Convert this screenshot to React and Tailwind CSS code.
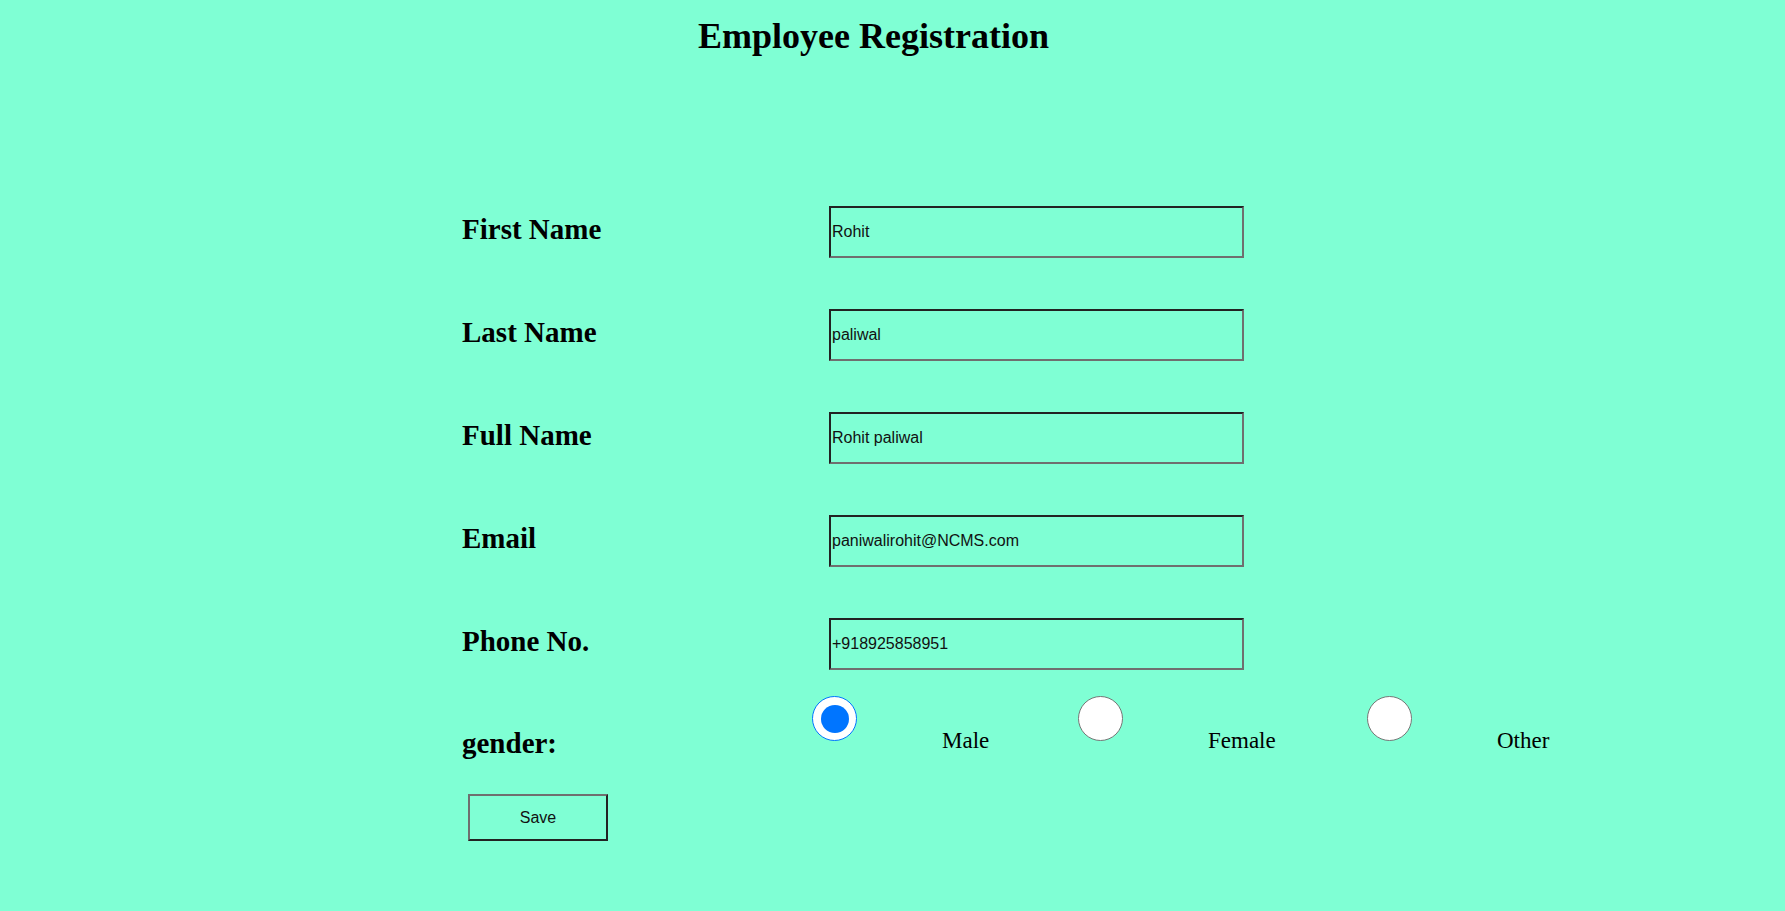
import React, { useState } from "react";

const fields = [
  { label: "First Name", value: "Rohit" },
  { label: "Last Name", value: "paliwal" },
  { label: "Full Name", value: "Rohit paliwal" },
  { label: "Email", value: "paniwalirohit@NCMS.com" },
  { label: "Phone No.", value: "+918925858951" },
];

const genders = [
  { key: "male", label: "Male", width: "w-[136px]" },
  { key: "female", label: "Female", width: "w-[159px]" },
  { key: "other", label: "Other", width: "w-[120px]" },
];

const Radio = ({ checked, onClick }) => (
  <button
    type="button"
    onClick={onClick}
    className={
      checked
        ? "w-[45px] h-[45px] shrink-0 rounded-full bg-white border border-[#0075ff] flex items-center justify-center"
        : "w-[45px] h-[45px] shrink-0 rounded-full bg-white border border-[#767676]"
    }
  >
    {checked && <span className="block w-[28px] h-[28px] rounded-full bg-[#0075ff]" />}
  </button>
);

export default function App() {
  const [values, setValues] = useState(fields.map((f) => f.value));
  const [gender, setGender] = useState("male");

  return (
    <div className="min-h-screen w-full bg-[#7fffd4] text-black font-['Liberation_Serif',serif]">
      <h1 className="pt-[14px] pr-[38px] text-center text-[36px] leading-[44px] font-bold">
        Employee Registration
      </h1>

      <form className="pl-[462px] pt-[148px]" onSubmit={(e) => e.preventDefault()}>
        {fields.map((f, i) => (
          <div key={f.label} className={i < fields.length - 1 ? "flex items-start mb-[51px]" : "flex items-start"}>
            <label className="w-[367px] text-[29px] leading-[46px] font-bold">{f.label}</label>
            <input
              type="text"
              value={values[i]}
              onChange={(e) => {
                const next = [...values];
                next[i] = e.target.value;
                setValues(next);
              }}
              className="w-[415px] h-[52px] border-2 border-t-[#222] border-l-[#222] border-r-[#6f6f6f] border-b-[#6f6f6f] bg-transparent px-[1px] text-[16px] text-[#111] font-['Liberation_Sans',sans-serif] outline-none"
            />
          </div>
        ))}

        {/* gender row */}
        <div className="flex items-start h-[70px] mt-[26px]">
          <label className="w-[350px] mt-[24px] text-[29px] leading-[46px] font-bold">gender:</label>
          {genders.map((g) => (
            <div key={g.key} className="flex items-start">
              <Radio checked={gender === g.key} onClick={() => setGender(g.key)} />
              <span className={`${g.width} ml-[85px] mt-[34px] text-[23px] leading-[22px]`}>{g.label}</span>
            </div>
          ))}
        </div>

        <button
          type="submit"
          className="ml-[6px] mt-[28px] w-[140px] h-[47px] border-2 border-t-[#6f6f6f] border-l-[#6f6f6f] border-r-[#222] border-b-[#222] bg-transparent text-[16px] text-[#111] font-['Liberation_Sans',sans-serif]"
        >
          Save
        </button>
      </form>
    </div>
  );
}
